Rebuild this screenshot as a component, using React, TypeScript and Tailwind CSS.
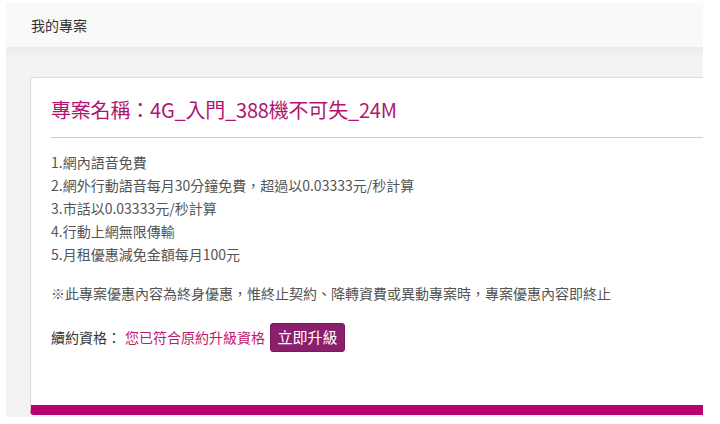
import React from "react";

const features = [
  "1.網內語音免費",
  "2.網外行動語音每月30分鐘免費，超過以0.03333元/秒計算",
  "3.市話以0.03333元/秒計算",
  "4.行動上網無限傳輸",
  "5.月租優惠減免金額每月100元",
];

export default function App() {
  return (
    <div
      className="w-[720px] h-[424px] bg-white pt-[3px] pl-[6px] overflow-hidden"
      style={{ fontFamily: '"Noto Sans CJK TC", "Noto Sans", sans-serif' }}
    >
      <div className="w-[697px] h-[414px] flex flex-col overflow-hidden">
        {/* page header */}
        <div className="h-[44px] bg-[#f9f9f9] flex items-center pl-[25px] text-[14px] text-[#333]">
          我的專案
        </div>

        {/* content */}
        <div className="flex-1 bg-gradient-to-b from-[#ececec] to-[#f3f3f3] to-[12px] pt-[30px] pl-[24px]">
          <div className="h-[338px] bg-white border border-r-0 border-[#dcdcdc] border-b-[10px] border-b-[#b8006f] rounded-l-[4px] pl-[20px] flex flex-col">
            <div className="pt-[18px] pb-[13px] border-b border-[#cfcfcf] text-[20px] leading-[28px] tracking-[-0.2px] text-[#b0166f]">
              專案名稱：4G_入門_388機不可失_24M
            </div>

            <ul className="mt-[13px] text-[14px] leading-[23px] text-[#555]">
              {features.map((f) => (
                <li key={f}>{f}</li>
              ))}
            </ul>

            <p className="mt-[16px] text-[14px] leading-[23px] text-[#555]">
              ※此專案優惠內容為終身優惠，惟終止契約、降轉資費或異動專案時，專案優惠內容即終止
            </p>

            <div className="mt-[18px] flex items-center text-[14px]">
              <span className="text-[#333]">續約資格：</span>
              <span className="ml-[4px] text-[#c2176f]">您已符合原約升級資格</span>
              <button className="ml-[5px] w-[75px] h-[29px] rounded-[3px] bg-[#8a1f6c] border border-[#7a1860] text-white text-[15px]">
                立即升級
              </button>
            </div>
          </div>
        </div>
      </div>
    </div>
  );
}
